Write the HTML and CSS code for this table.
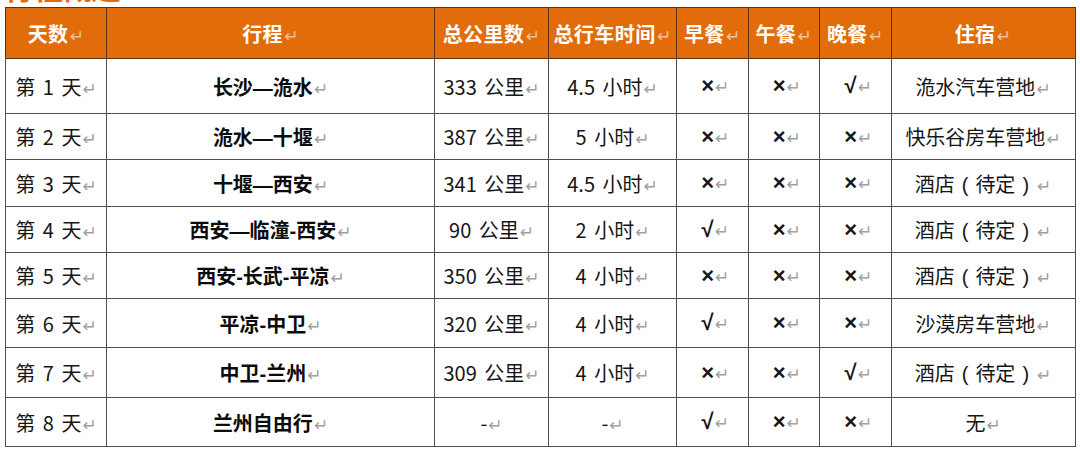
FILE: index.html
```html
<!DOCTYPE html>
<html lang="zh-CN">
<head>
<meta charset="utf-8">
<title>行程概述</title>
<link rel="stylesheet" href="styles.css">
</head>
<body>
<div class="title"><span>行程概述</span></div>
<table class="trip">
  <colgroup>
    <col class="c-day"><col class="c-route"><col class="c-km"><col class="c-time">
    <col class="c-meal"><col class="c-meal"><col class="c-meal"><col class="c-stay">
  </colgroup>
  <thead>
    <tr>
      <th>天数<i>↵</i></th><th>行程<i>↵</i></th><th>总公里数<i>↵</i></th><th>总行车时间<i>↵</i></th>
      <th>早餐<i>↵</i></th><th>午餐<i>↵</i></th><th>晚餐<i>↵</i></th><th>住宿<i>↵</i></th>
    </tr>
  </thead>
  <tbody>
    <tr class="r1"><td>第 1 天<i>↵</i></td><td class="route">长沙—洈水<i>↵</i></td><td>333 公里<i>↵</i></td><td>4.5 小时<i>↵</i></td><td class="m">×<i>↵</i></td><td class="m">×<i>↵</i></td><td class="m">√<i>↵</i></td><td>洈水汽车营地<i>↵</i></td></tr>
    <tr class="r2"><td>第 2 天<i>↵</i></td><td class="route">洈水—十堰<i>↵</i></td><td>387 公里<i>↵</i></td><td>5 小时<i>↵</i></td><td class="m">×<i>↵</i></td><td class="m">×<i>↵</i></td><td class="m">×<i>↵</i></td><td>快乐谷房车营地<i>↵</i></td></tr>
    <tr class="r3"><td>第 3 天<i>↵</i></td><td class="route">十堰—西安<i>↵</i></td><td>341 公里<i>↵</i></td><td>4.5 小时<i>↵</i></td><td class="m">×<i>↵</i></td><td class="m">×<i>↵</i></td><td class="m">×<i>↵</i></td><td>酒店<span class="p">(</span>待定<span class="p">)</span><i>↵</i></td></tr>
    <tr class="r4"><td>第 4 天<i>↵</i></td><td class="route">西安—临潼-西安<i>↵</i></td><td>90 公里<i>↵</i></td><td>2 小时<i>↵</i></td><td class="m">√<i>↵</i></td><td class="m">×<i>↵</i></td><td class="m">×<i>↵</i></td><td>酒店<span class="p">(</span>待定<span class="p">)</span><i>↵</i></td></tr>
    <tr class="r5"><td>第 5 天<i>↵</i></td><td class="route">西安-长武-平凉<i>↵</i></td><td>350 公里<i>↵</i></td><td>4 小时<i>↵</i></td><td class="m">×<i>↵</i></td><td class="m">×<i>↵</i></td><td class="m">×<i>↵</i></td><td>酒店<span class="p">(</span>待定<span class="p">)</span><i>↵</i></td></tr>
    <tr class="r6"><td>第 6 天<i>↵</i></td><td class="route">平凉-中卫<i>↵</i></td><td>320 公里<i>↵</i></td><td>4 小时<i>↵</i></td><td class="m">√<i>↵</i></td><td class="m">×<i>↵</i></td><td class="m">×<i>↵</i></td><td>沙漠房车营地<i>↵</i></td></tr>
    <tr class="r7"><td>第 7 天<i>↵</i></td><td class="route">中卫-兰州<i>↵</i></td><td>309 公里<i>↵</i></td><td>4 小时<i>↵</i></td><td class="m">×<i>↵</i></td><td class="m">×<i>↵</i></td><td class="m">√<i>↵</i></td><td>酒店<span class="p">(</span>待定<span class="p">)</span><i>↵</i></td></tr>
    <tr class="r8"><td>第 8 天<i>↵</i></td><td class="route">兰州自由行<i>↵</i></td><td>-<i>↵</i></td><td>-<i>↵</i></td><td class="m">√<i>↵</i></td><td class="m">×<i>↵</i></td><td class="m">×<i>↵</i></td><td>无<i>↵</i></td></tr>
  </tbody>
</table>
</body>
</html>
```

FILE: styles.css
```css
html, body {
  margin: 0;
  padding: 0;
  background: #ffffff;
}

body {
  font-family: "Noto Sans CJK SC", "Noto Sans", sans-serif;
  color: #111111;
  width: 1080px;
  height: 453px;
  overflow: hidden;
}

.title {
  height: 7px;
  overflow: hidden;
  display: flex;
  align-items: flex-end;
  padding-left: 4px;
}

.title span {
  display: block;
  font-size: 30px;
  line-height: 30px;
  font-weight: 700;
  color: #e36c0a;
  margin-bottom: 6px;
  letter-spacing: -1px;
}

.trip {
  margin-left: 5px;
  border-collapse: collapse;
  table-layout: fixed;
  width: 1070px;
}

.c-day { width: 101px; }
.c-route { width: 328px; }
.c-km { width: 114px; }
.c-time { width: 128px; }
.c-meal { width: 71.5px; }
.c-stay { width: 184px; }

.trip th,
.trip td {
  border: 1px solid #4e4e4e;
  text-align: center;
  vertical-align: middle;
  padding: 0;
  white-space: nowrap;
  font-size: 20px;
}

.trip th {
  background: #e36c0a;
  color: #ffffff;
  font-weight: 700;
  height: 50px;
  border-color: #5e3313;
  letter-spacing: 0.5px;
}

.trip td {
  font-weight: 400;
  color: #161616;
  word-spacing: 3px;
}

.trip td.route {
  font-family: "Liberation Sans", "Noto Sans CJK SC", sans-serif;
  font-weight: 700;
  color: #0c0c0c;
  word-spacing: 0;
}

.trip td.m {
  font-family: "Liberation Sans", sans-serif;
  font-weight: 700;
  font-size: 22px;
  padding-left: 6px;
}

.trip .p {
  font-family: "Liberation Sans", sans-serif;
  margin: 0 7px;
}

.trip i {
  font-style: normal;
  font-weight: 400;
  font-size: 17px;
  color: #a0a0a0;
  margin-left: 1px;
  font-family: "DejaVu Sans", sans-serif;
}

.trip th i {
  color: #f0c29c;
}

.r1 td { height: 54px; }
.r2 td { height: 45px; }
.r3 td { height: 46px; }
.r4 td { height: 45px; }
.r5 td { height: 45px; }
.r6 td { height: 48px; }
.r7 td { height: 49px; }
.r8 td { height: 48px; }
```
